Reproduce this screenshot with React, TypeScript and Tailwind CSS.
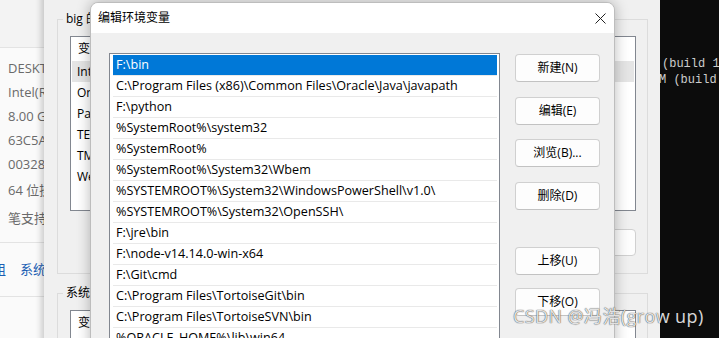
import React from "react";

const paths = [
  "F:\\bin",
  "C:\\Program Files (x86)\\Common Files\\Oracle\\Java\\javapath",
  "F:\\python",
  "%SystemRoot%\\system32",
  "%SystemRoot%",
  "%SystemRoot%\\System32\\Wbem",
  "%SYSTEMROOT%\\System32\\WindowsPowerShell\\v1.0\\",
  "%SYSTEMROOT%\\System32\\OpenSSH\\",
  "F:\\jre\\bin",
  "F:\\node-v14.14.0-win-x64",
  "F:\\Git\\cmd",
  "C:\\Program Files\\TortoiseGit\\bin",
  "C:\\Program Files\\TortoiseSVN\\bin",
  "%ORACLE_HOME%\\lib\\win64",
];

const userVars = ["IntelliJ IDEA", "OneDrive", "Path", "TEMP", "TMP", "WebStorm"];

// 最底层：系统属性窗口，只露出左边一条
function SystemWindow() {
  return (
    <div className="absolute left-0 top-0 h-full w-[80px] bg-[#fafafa] text-[13px] text-[#6a6a6a]">
      <div className="h-[48px] border-b border-[#e3e3e3] bg-[#f3f3f3]" />
      <div className="flex flex-col pl-[8px] pt-[8px] whitespace-nowrap">
        <div className="h-[24px] leading-[24px]">DESKTOP-7K2L9Q</div>
        <div className="h-[24px] leading-[24px]">Intel(R) Core(TM)</div>
        <div className="h-[24px] leading-[24px]">8.00 GB</div>
        <div className="h-[24px] leading-[24px]">63C5A1F0-22B4</div>
        <div className="h-[24px] leading-[24px]">00328-90000</div>
        <div className="mt-[2px] h-[24px] leading-[24px]">64 位操作系统</div>
        <div className="mt-[4px] h-[24px] leading-[24px]">笔支持</div>
      </div>
      <div className="mt-[12px] flex h-[55px] items-center gap-[14px] border-y border-[#e3e3e3] text-[#1a5fb4] whitespace-nowrap">
        <span className="-ml-[7px]">组</span>
        <span>系统保护</span>
      </div>
    </div>
  );
}

function GroupList({ header, rows, hover }: { header: string; rows: string[]; hover?: boolean }) {
  return (
    <div className="h-[175px] w-[566px] overflow-hidden border border-[#828790] bg-white">
      <div className="flex h-[24px] items-center pl-[7px]">{header}</div>
      {rows.map((r, i) => (
        <div
          key={r}
          className={
            "mx-[1px] flex h-[21px] items-center pl-[5px] " +
            (hover && i === 0 ? "bg-[#e5e5e5]" : "")
          }
        >
          {r}
        </div>
      ))}
    </div>
  );
}

// 中间层：环境变量窗口
function EnvWindow() {
  return (
    <div className="absolute left-[44px] top-[-10px] h-[370px] w-[640px] bg-[#f0f0f0] pl-[13px] pt-[20px] text-[12px] text-black shadow-[-3px_0_6px_rgba(0,0,0,0.18)]">
      <fieldset className="h-[264px] w-[591px] border border-[#dcdcdc]">
        <legend className="ml-[5px] px-[3px] leading-[18px]">big 的用户变量(U)</legend>
        <div className="mt-[8px] pl-[12px]">
          <GroupList header="变量" rows={userVars} hover />
        </div>
        <div className="mt-[18px] flex w-[578px] justify-end">
          <div className="h-[27px] w-[75px] rounded-[4px] border border-[#d0d0d0] bg-[#fdfdfd]" />
        </div>
      </fieldset>
      <fieldset className="mt-[10px] h-[120px] w-[591px] border border-[#dcdcdc]">
        <legend className="ml-[5px] px-[3px] leading-[18px]">系统变量(S)</legend>
        <div className="mt-[8px] pl-[12px]">
          <GroupList header="变量" rows={[]} />
        </div>
      </fieldset>
    </div>
  );
}

function DialogButton({ label, className = "" }: { label: string; className?: string }) {
  return (
    <div
      className={
        "flex h-[28px] w-[85px] items-center justify-center rounded-[4px] border border-[#d0d0d0] border-b-[#c2c2c2] bg-[#fdfdfd] " +
        className
      }
    >
      {label}
    </div>
  );
}

// 最上层：编辑环境变量对话框
function EditDialog() {
  return (
    <div className="absolute left-[90px] top-[2px] h-[380px] w-[525px] overflow-hidden rounded-t-[8px] border border-[#bdbdbd] bg-[#f0f0f0] text-[12px] text-black shadow-[0_0_14px_rgba(0,0,0,0.28)]">
      <div className="flex h-[30px] items-center justify-between bg-white pl-[7px] pr-[8px]">
        <span>编辑环境变量</span>
        <svg width="11" height="11" viewBox="0 0 11 11">
          <path d="M0.5 0.5 L10.5 10.5 M10.5 0.5 L0.5 10.5" stroke="#222" strokeWidth="1" />
        </svg>
      </div>
      <div className="flex gap-[15px] pl-[18px] pt-[20px]">
        <div className="h-[330px] w-[391px] border border-[#828790] bg-white pl-[3px] pr-[2px] pt-[1px] text-[12.6px]">
          {paths.map((p, i) => (
            <div
              key={p}
              className={
                "flex h-[21px] items-center border-b border-[#e9e9e9] pl-[3px] whitespace-nowrap " +
                (i === 0 ? "bg-[#0078d7] text-white" : "")
              }
            >
              {p}
            </div>
          ))}
        </div>
        <div className="flex flex-col pt-[1px]">
          <DialogButton label="新建(N)" />
          <DialogButton label="编辑(E)" className="mt-[14.5px]" />
          <DialogButton label="浏览(B)..." className="mt-[14.5px]" />
          <DialogButton label="删除(D)" className="mt-[14.5px]" />
          <DialogButton label="上移(U)" className="mt-[37px]" />
          <DialogButton label="下移(O)" className="mt-[13px]" />
        </div>
      </div>
    </div>
  );
}

function Terminal() {
  return (
    <div className="absolute left-[660px] top-0 h-full w-[59px] overflow-hidden bg-[#0c0c0c] pt-[56px] font-['Liberation_Mono',monospace] text-[12px] leading-[16px] text-[#cccccc] whitespace-pre">
      <div className="pl-[2px]">(build 1.8.0_291-b10)</div>
      <div className="-ml-[1px]">M (build 25.291-b10, mixed mode)</div>
    </div>
  );
}

export default function App() {
  return (
    <div className="relative h-[338px] w-[719px] overflow-hidden bg-[#f0f0f0] font-['Segoe_UI','Open_Sans','Noto_Sans_CJK_SC',sans-serif]">
      <SystemWindow />
      <EnvWindow />
      <EditDialog />
      <Terminal />
      <div className="absolute left-[513px] top-[305px] text-[18px] leading-[22px] tracking-[0.4px] whitespace-nowrap text-white/85 [text-shadow:0_0_1px_rgba(0,0,0,0.6),0_0_1px_rgba(0,0,0,0.6)]">
        CSDN @冯浩(grow up)
      </div>
    </div>
  );
}
